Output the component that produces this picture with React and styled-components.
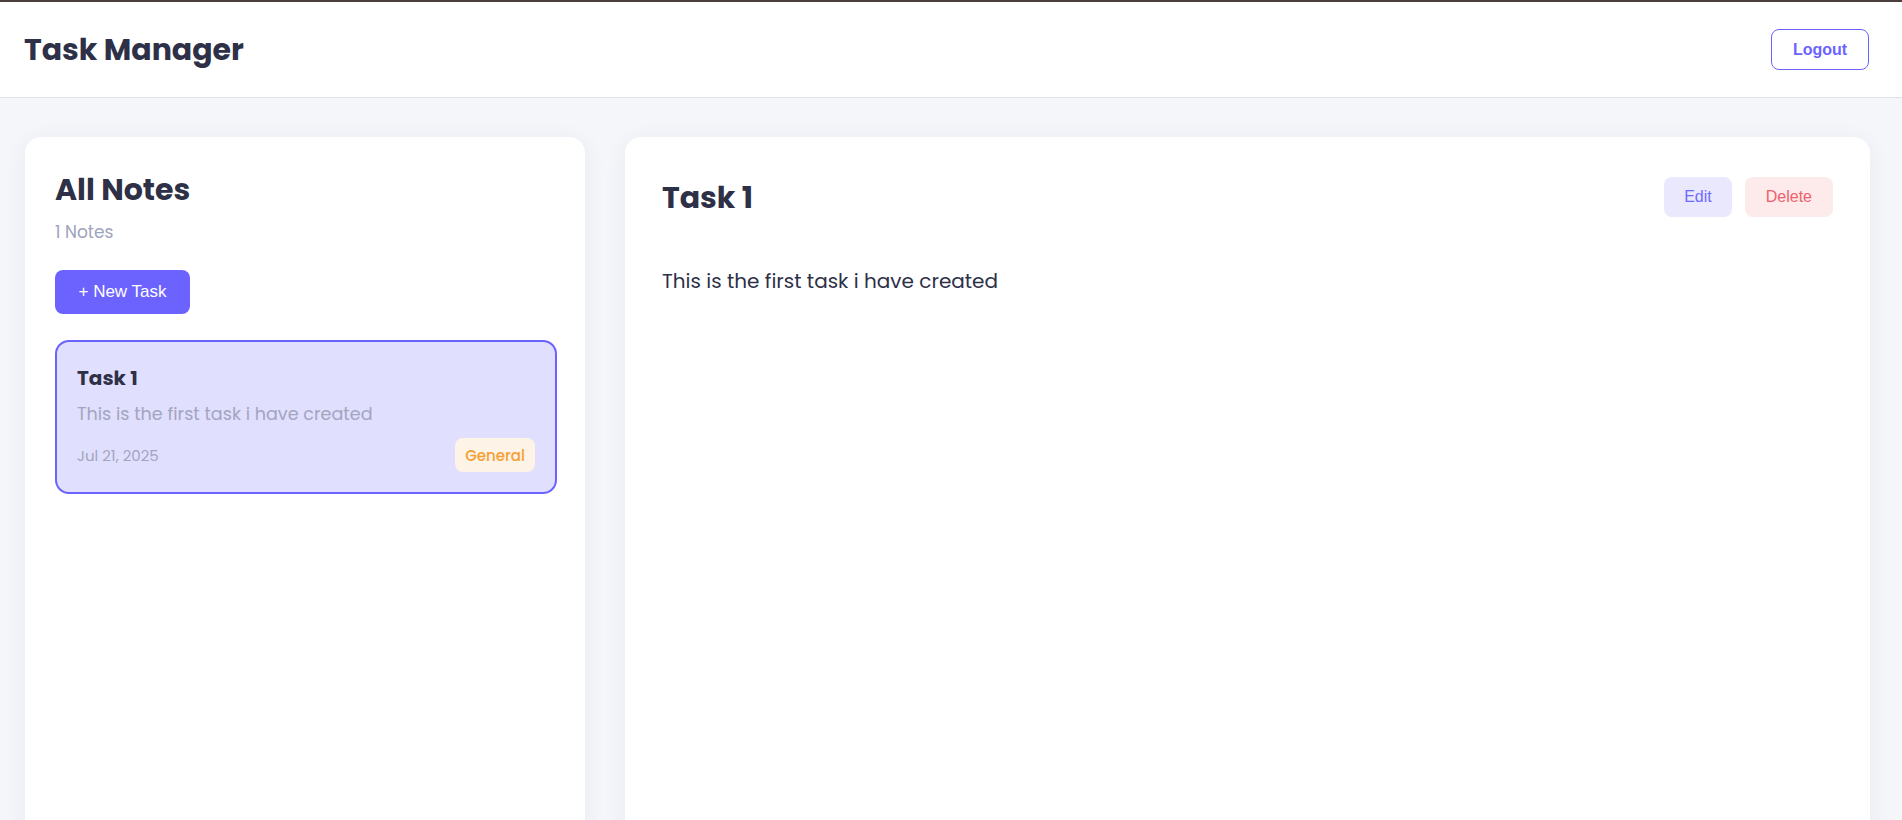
import React from "react";
import styled, { createGlobalStyle } from "styled-components";

const GlobalStyle = createGlobalStyle`
  * { box-sizing: border-box; }
  body {
    margin: 0;
    background: #f5f6fa;
    font-family: "Poppins", "Inter", "Noto Sans", sans-serif;
    color: #2d3047;
  }
`;

const Page = styled.div`
  min-height: 100vh;
  border-top: 2px solid #4a3f3e;
`;

const Header = styled.header`
  display: flex;
  align-items: center;
  justify-content: space-between;
  height: 96px;
  padding: 0 33px 0 24px;
  background: #ffffff;
  border-bottom: 1px solid #dfe0ee;
`;

const Brand = styled.h1`
  margin: 0;
  font-size: 30px;
  font-weight: 700;
  color: #2d3047;
`;

const OutlineButton = styled.button`
  width: 98px;
  height: 41px;
  border: 1.5px solid #6c63ff;
  border-radius: 8px;
  background: #ffffff;
  color: #6c63ff;
  font-family: "Liberation Sans", Arial, sans-serif;
  font-weight: 700;
  font-size: 16px;
  cursor: pointer;
`;

const Main = styled.main`
  display: grid;
  grid-template-columns: 560px 1fr;
  gap: 40px;
  padding: 39px 32px 0 25px;
`;

const Panel = styled.section`
  background: #ffffff;
  border-radius: 16px;
  box-shadow: 0 4px 24px rgba(40, 44, 90, 0.06);
  min-height: 740px;
  padding: ${(p) => p.$pad};
`;

const PanelTitle = styled.h2`
  margin: 0;
  font-size: 30px;
  font-weight: 700;
  line-height: 1.3;
  color: #2d3047;
`;

const Muted = styled.p`
  margin: 10px 0 0;
  font-size: 17px;
  color: #a0a3bd;
`;

const PrimaryButton = styled.button`
  margin-top: 25px;
  width: 135px;
  height: 44px;
  border: none;
  border-radius: 8px;
  background: #6c63ff;
  color: #ffffff;
  font-family: "Liberation Sans", Arial, sans-serif;
  font-size: 17px;
  cursor: pointer;
`;

const NoteList = styled.div`
  margin-top: 26px;
  display: flex;
  flex-direction: column;
  gap: 16px;
`;

const NoteCard = styled.article`
  height: 154px;
  padding: 20px 20px 0 20px;
  border: 2px solid ${(p) => (p.$active ? "#6c63ff" : "#e6e7f0")};
  border-radius: 14px;
  background: ${(p) => (p.$active ? "#e0dffd" : "#ffffff")};
`;

const NoteTitle = styled.h3`
  margin: 0;
  font-size: 20px;
  font-weight: 700;
  line-height: 1.6;
  color: #2d3047;
`;

const NoteExcerpt = styled.p`
  margin: 7px 0 0;
  font-size: 17.6px;
  color: #a3a5bf;
  line-height: 1.5;
`;

const NoteFooter = styled.div`
  display: flex;
  align-items: center;
  justify-content: space-between;
  margin-top: 11px;
`;

const NoteDate = styled.span`
  font-size: 15px;
  color: #a3a5bf;
`;

const Badge = styled.span`
  display: inline-flex;
  align-items: center;
  justify-content: center;
  width: 80px;
  height: 34px;
  border-radius: 8px;
  background: #fdf3e6;
  color: #f5a033;
  font-size: 15px;
  font-weight: 500;
`;

const DetailHead = styled.div`
  display: flex;
  align-items: center;
  justify-content: space-between;
`;

const Actions = styled.div`
  display: flex;
  gap: 13px;
`;

const SoftButton = styled.button`
  height: 40px;
  padding: 0 ${(p) => p.$px}px;
  border: none;
  border-radius: 8px;
  background: ${(p) => p.$bg};
  color: ${(p) => p.$fg};
  font-family: "Liberation Sans", Arial, sans-serif;
  font-size: 16px;
  cursor: pointer;
`;

const Body = styled.p`
  margin: 49px 0 0;
  font-size: 20px;
  color: #2d3047;
`;

export default function App() {
  return (
    <>
      <GlobalStyle />
      <Page>
        <Header>
          <Brand>Task Manager</Brand>
          <OutlineButton>Logout</OutlineButton>
        </Header>
        <Main>
          <Panel $pad="33px 28px 30px 30px">
            <PanelTitle>All Notes</PanelTitle>
            <Muted>1 Notes</Muted>
            <PrimaryButton>+ New Task</PrimaryButton>
            <NoteList>
              <NoteCard $active>
                <NoteTitle>Task 1</NoteTitle>
                <NoteExcerpt>This is the first task i have created</NoteExcerpt>
                <NoteFooter>
                  <NoteDate>Jul 21, 2025</NoteDate>
                  <Badge>General</Badge>
                </NoteFooter>
              </NoteCard>
            </NoteList>
          </Panel>
          <Panel $pad="40px 37px 37px 37px">
            <DetailHead>
              <PanelTitle>Task 1</PanelTitle>
              <Actions>
                <SoftButton $px={20} $bg="#e9e8fc" $fg="#7169ff">Edit</SoftButton>
                <SoftButton $px={21} $bg="#fdeaea" $fg="#f0616d">Delete</SoftButton>
              </Actions>
            </DetailHead>
            <Body>This is the first task i have created</Body>
          </Panel>
        </Main>
      </Page>
    </>
  );
}
